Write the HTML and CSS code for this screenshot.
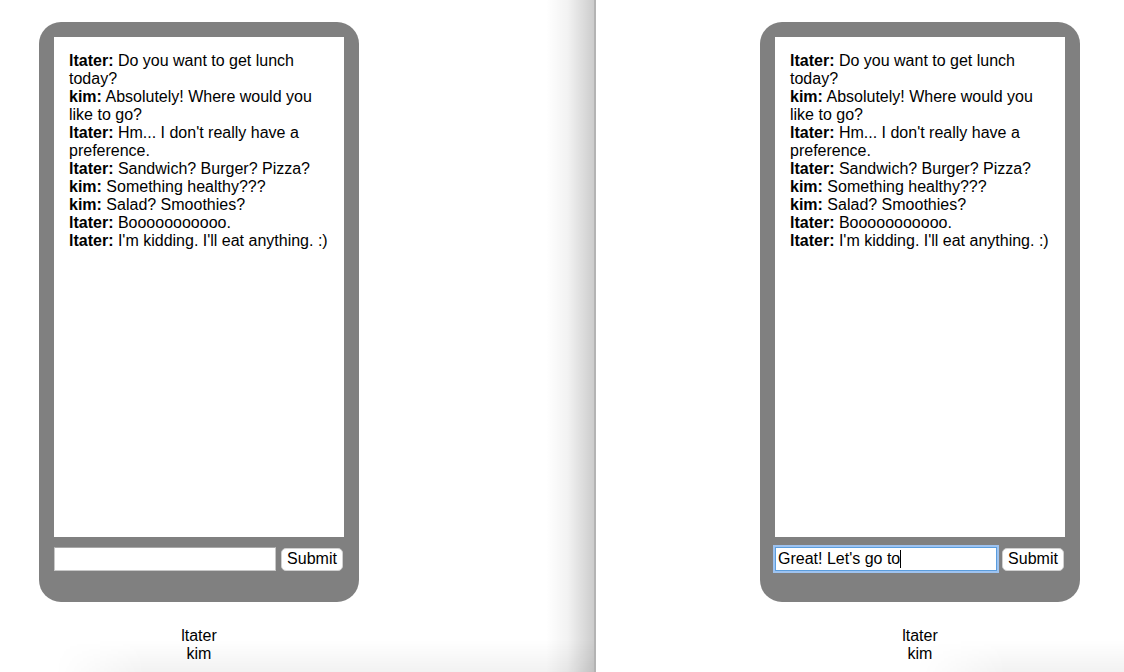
FILE: index.html
```html
<!DOCTYPE html>
<html>
<head>
<meta charset="utf-8">
<link rel="stylesheet" href="styles.css">
</head>
<body>
<div class="pane pane-left">
  <div class="client">
    <div class="phone">
      <div class="screen">
        <div><b>ltater:</b> Do you want to get lunch today?</div>
        <div><b>kim:</b> Absolutely! Where would you like to go?</div>
        <div><b>ltater:</b> Hm... I don't really have a preference.</div>
        <div><b>ltater:</b> Sandwich? Burger? Pizza?</div>
        <div><b>kim:</b> Something healthy???</div>
        <div><b>kim:</b> Salad? Smoothies?</div>
        <div><b>ltater:</b> Booooooooooo.</div>
        <div><b>ltater:</b> I'm kidding. I'll eat anything. :)</div>
      </div>
      <div class="form">
        <input class="msg" type="text" value="">
        <button class="submit">Submit</button>
      </div>
    </div>
    <div class="users">
      <div>ltater</div>
      <div>kim</div>
    </div>
  </div>
</div>
<div class="divider"></div>
<div class="pane pane-right">
  <div class="client">
    <div class="phone">
      <div class="screen">
        <div><b>ltater:</b> Do you want to get lunch today?</div>
        <div><b>kim:</b> Absolutely! Where would you like to go?</div>
        <div><b>ltater:</b> Hm... I don't really have a preference.</div>
        <div><b>ltater:</b> Sandwich? Burger? Pizza?</div>
        <div><b>kim:</b> Something healthy???</div>
        <div><b>kim:</b> Salad? Smoothies?</div>
        <div><b>ltater:</b> Booooooooooo.</div>
        <div><b>ltater:</b> I'm kidding. I'll eat anything. :)</div>
      </div>
      <div class="form">
        <div class="msg focused">Great! Let's go to<span class="caret"></span></div>
        <button class="submit">Submit</button>
      </div>
    </div>
    <div class="users">
      <div>ltater</div>
      <div>kim</div>
    </div>
  </div>
</div>
</body>
</html>
```

FILE: styles.css
```css
html, body {
  margin: 0;
  padding: 0;
  height: 672px;
  overflow: hidden;
  background: #fff;
}
body {
  display: flex;
  font-family: "Liberation Sans", Arial, sans-serif;
  font-size: 16px;
  line-height: 18px;
  color: #000;
}
.pane {
  position: relative;
  height: 672px;
  box-sizing: border-box;
  padding-top: 22px;
  overflow: hidden;
}
.pane-left {
  width: 594px;
  padding-left: 39px;
}
.pane-right {
  flex: 1;
  padding-left: 164px;
}
.pane-left::before {
  content: "";
  position: absolute;
  top: 0;
  right: 0;
  width: 48px;
  height: 100%;
  background: linear-gradient(to right, rgba(0,0,0,0) 0%, rgba(0,0,0,0.05) 45%, rgba(0,0,0,0.2) 100%);
  pointer-events: none;
}
.pane::after {
  content: "";
  position: absolute;
  bottom: 0;
  right: 0;
  height: 32px;
  background: linear-gradient(to bottom, rgba(0,0,0,0) 0%, rgba(0,0,0,0.05) 100%);
  -webkit-mask-image: linear-gradient(to right, transparent 0, #000 90px);
  mask-image: linear-gradient(to right, transparent 0, #000 90px);
  pointer-events: none;
}
.pane-left::after {
  left: 55px;
}
.pane-right::after {
  left: 320px;
}
.divider {
  width: 2px;
  height: 672px;
  background: #b3b3b3;
  flex: none;
}
.client {
  width: 320px;
}
.phone {
  width: 320px;
  height: 580px;
  box-sizing: border-box;
  background: #808080;
  border-radius: 22px;
  padding: 15px;
}
.screen {
  height: 500px;
  box-sizing: border-box;
  background: #fff;
  padding: 15px 15px;
}
.form {
  display: flex;
  align-items: center;
  gap: 5px;
  margin-top: 10px;
}
.msg {
  width: 222px;
  height: 24px;
  box-sizing: border-box;
  margin: 0;
  border: 1px solid #c8c8c8;
  border-top-color: #a9a9a9;
  background: #fff;
  font-family: "Liberation Sans", Arial, sans-serif;
  font-size: 16px;
  line-height: 20px;
  padding: 1px 2px;
  outline: none;
}
.msg.focused {
  border: 1px solid #5b9ddd;
  box-shadow: 0 0 0 2px #9ec3f0;
  padding: 1px 2px;
  white-space: nowrap;
}
.caret {
  display: inline-block;
  width: 1px;
  height: 18px;
  background: #000;
  vertical-align: -4px;
}
.submit {
  width: 62px;
  height: 23px;
  box-sizing: border-box;
  margin: 0;
  padding: 0 5px;
  background: #fff;
  border: 1px solid #d0d0d0;
  border-radius: 5px;
  font-family: "Liberation Sans", Arial, sans-serif;
  font-size: 16px;
  line-height: 20px;
  color: #000;
}
.users {
  margin-top: 25px;
  text-align: center;
}
```
